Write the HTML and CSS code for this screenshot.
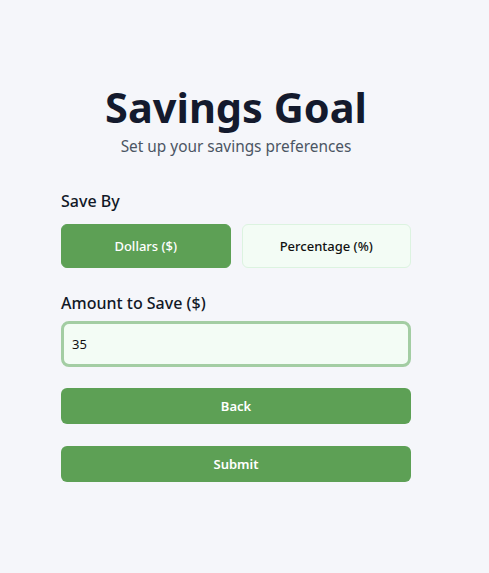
FILE: index.html
```html
<!DOCTYPE html>
<html lang="en">
<head>
<meta charset="utf-8">
<link rel="stylesheet" href="styles.css">
</head>
<body>
<main class="page">
  <header class="head">
    <h1 class="title">Savings Goal</h1>
    <p class="subtitle">Set up your savings preferences</p>
  </header>
  <section class="field">
    <div class="label">Save By</div>
    <div class="toggle">
      <button class="opt opt-active">Dollars ($)</button>
      <button class="opt">Percentage (%)</button>
    </div>
  </section>
  <section class="field field-amount">
    <div class="label">Amount to Save ($)</div>
    <div class="input">35</div>
  </section>
  <button class="action">Back</button>
  <button class="action">Submit</button>
</main>
</body>
</html>
```
FILE: styles.css
```css
* { box-sizing: border-box; }
html, body { margin: 0; padding: 0; }
body {
  background: #f5f6fa;
  font-family: "Noto Sans", "Open Sans", sans-serif;
  width: 489px;
  height: 573px;
}
.page {
  width: 350px;
  margin-left: 61px;
  padding-top: 80px;
  display: flex;
  flex-direction: column;
}
.head { text-align: center; }
.title {
  margin: 0;
  font-size: 41.5px;
  line-height: 54px;
  font-weight: 700;
  color: #141a2d;
}
.subtitle {
  margin: 2px 0 0;
  font-size: 15.4px;
  line-height: 22px;
  color: #4b5563;
}
.field { margin-top: 32px; }
.label {
  font-size: 16px;
  line-height: 22px;
  font-weight: 500;
  color: #111827;
}
.toggle {
  margin-top: 12px;
  display: grid;
  grid-template-columns: 1fr 1fr;
  gap: 11px;
}
.opt {
  height: 44px;
  border: 1px solid #dcf3e0;
  border-radius: 6px;
  background: #f3fcf5;
  color: #111;
  font-family: inherit;
  font-size: 13px;
  font-weight: 500;
}
.opt-active {
  background: #5da055;
  border-color: #5da055;
  color: #fff;
}
.field-amount { margin-top: 24px; }
.input {
  margin-top: 7px;
  height: 46px;
  border: 3px solid #a3cda3;
  border-radius: 8px;
  background: #f3fcf5;
  padding: 0 8px;
  display: flex;
  align-items: center;
  font-size: 13px;
  color: #111;
}
.action {
  margin-top: 21px;
  height: 36px;
  border: none;
  border-radius: 6px;
  background: #5da055;
  color: #fff;
  font-family: inherit;
  font-size: 13px;
  font-weight: 600;
}
.action + .action { margin-top: 22px; }
```
